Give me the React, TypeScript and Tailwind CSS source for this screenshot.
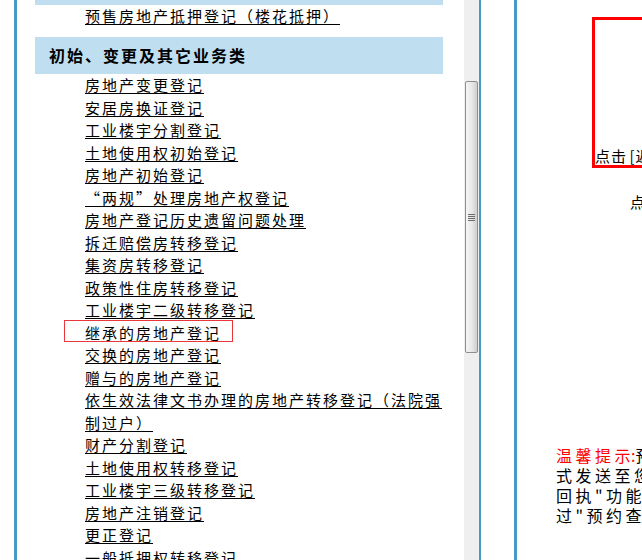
import React from "react";

const FONT = { fontFamily: '"Noto Sans CJK SC", "Noto Sans", sans-serif' };

const ITEMS = [
  "房地产变更登记",
  "安居房换证登记",
  "工业楼宇分割登记",
  "土地使用权初始登记",
  "房地产初始登记",
  "“两规”处理房地产权登记",
  "房地产登记历史遗留问题处理",
  "拆迁赔偿房转移登记",
  "集资房转移登记",
  "政策性住房转移登记",
  "工业楼宇二级转移登记",
  "继承的房地产登记",
  "交换的房地产登记",
  "赠与的房地产登记",
  "依生效法律文书办理的房地产转移登记（法院强制过户）",
  "财产分割登记",
  "土地使用权转移登记",
  "工业楼宇三级转移登记",
  "房地产注销登记",
  "更正登记",
  "一般抵押权转移登记",
];

const HIGHLIGHT = "继承的房地产登记";

const LinkItem = ({ label }: { label: string }) => (
  <li className="relative">
    {label === HIGHLIGHT ? (
      <span className="pointer-events-none absolute left-[-21px] top-[-1.5px] h-[22px] w-[169px] border border-[#e8383d]" />
    ) : null}
    <a href="#" className="text-black underline decoration-1 underline-offset-[2px]">
      {label}
    </a>
  </li>
);

const Scrollbar = () => (
  <div className="flex w-[15px] shrink-0 flex-col bg-[#efefef]">
    <div className="h-[81px]" />
    <div className="mx-[1px] flex h-[272px] items-center justify-center rounded-[2px] border border-[#8e8e8e] bg-gradient-to-r from-[#f5f5f5] via-[#e9e9e9] to-[#cfcfcf]">
      <div className="flex flex-col gap-[1px]">
        <div className="h-[1px] w-[7px] bg-[#6b6b6b]" />
        <div className="h-[1px] w-[7px] bg-[#6b6b6b]" />
        <div className="h-[1px] w-[7px] bg-[#6b6b6b]" />
        <div className="h-[1px] w-[7px] bg-[#6b6b6b]" />
      </div>
    </div>
  </div>
);

const App = () => {
  return (
    <div className="flex h-[560px] w-[642px] overflow-hidden bg-white" style={FONT}>
      <div className="w-[14px] shrink-0" />

      {/* left menu frame */}
      <div className="flex h-full shrink-0 border-l-[3px] border-r-2 border-[#4799c7]">
        <div className="w-[447px] overflow-hidden">
          <div className="ml-[18px] w-[408px]">
            <div className="h-[5px] bg-[#bfdff0]" />
            <ul className="pl-[50px] text-[15px] leading-[22.5px] tracking-[2px]">
              <LinkItem label="预售房地产抵押登记（楼花抵押）" />
            </ul>
            <div className="mt-[9.5px] flex h-[37px] items-center bg-[#bfdff0] pb-[2px] pl-[14px] text-[16px] font-bold tracking-[2px] text-black">
              初始、变更及其它业务类
            </div>
            <ul className="pl-[50px] text-[15px] leading-[22.5px] tracking-[2px]">
              {ITEMS.map((item) => (
                <LinkItem key={item} label={item} />
              ))}
            </ul>
          </div>
        </div>
        <Scrollbar />
      </div>

      <div className="w-[33px] shrink-0" />

      {/* right content frame */}
      <div className="h-full flex-1 overflow-hidden border-l-[3px] border-[#4799c7]">
        <div className="w-[400px]">
          <div className="ml-[75px] mt-[17px] flex h-[151px] w-[300px] flex-col justify-end border-[3px] border-[#ff0000]">
            <p className="whitespace-nowrap text-[15px] leading-[19px] tracking-[1px] text-black">
              点击 <span className="-ml-[2px]">[返回首页]</span> 查看办理流程
            </p>
          </div>
          <p className="ml-[113px] mt-[24px] whitespace-nowrap text-[15px] leading-[19px] tracking-[2px] text-black">点击此处预约办理业务</p>

          <div className="ml-[39px] mt-[234px] whitespace-nowrap text-[16px] leading-[20px] tracking-[3.5px] text-black">
            <p>
              <span className="text-[#ff0000]">
                温馨提示<span className="-ml-[3px] tracking-normal">:</span>
              </span>
              预约成功后，预约信息将以短信方
            </p>
            <p>式发送至您的手机，您也可以通过"打印预约</p>
            <p>回执"功能。打印预约回执，或通</p>
            <p>过"预约查询"功能查询预约信息。</p>
          </div>
        </div>
      </div>
    </div>
  );
};

export default App;
